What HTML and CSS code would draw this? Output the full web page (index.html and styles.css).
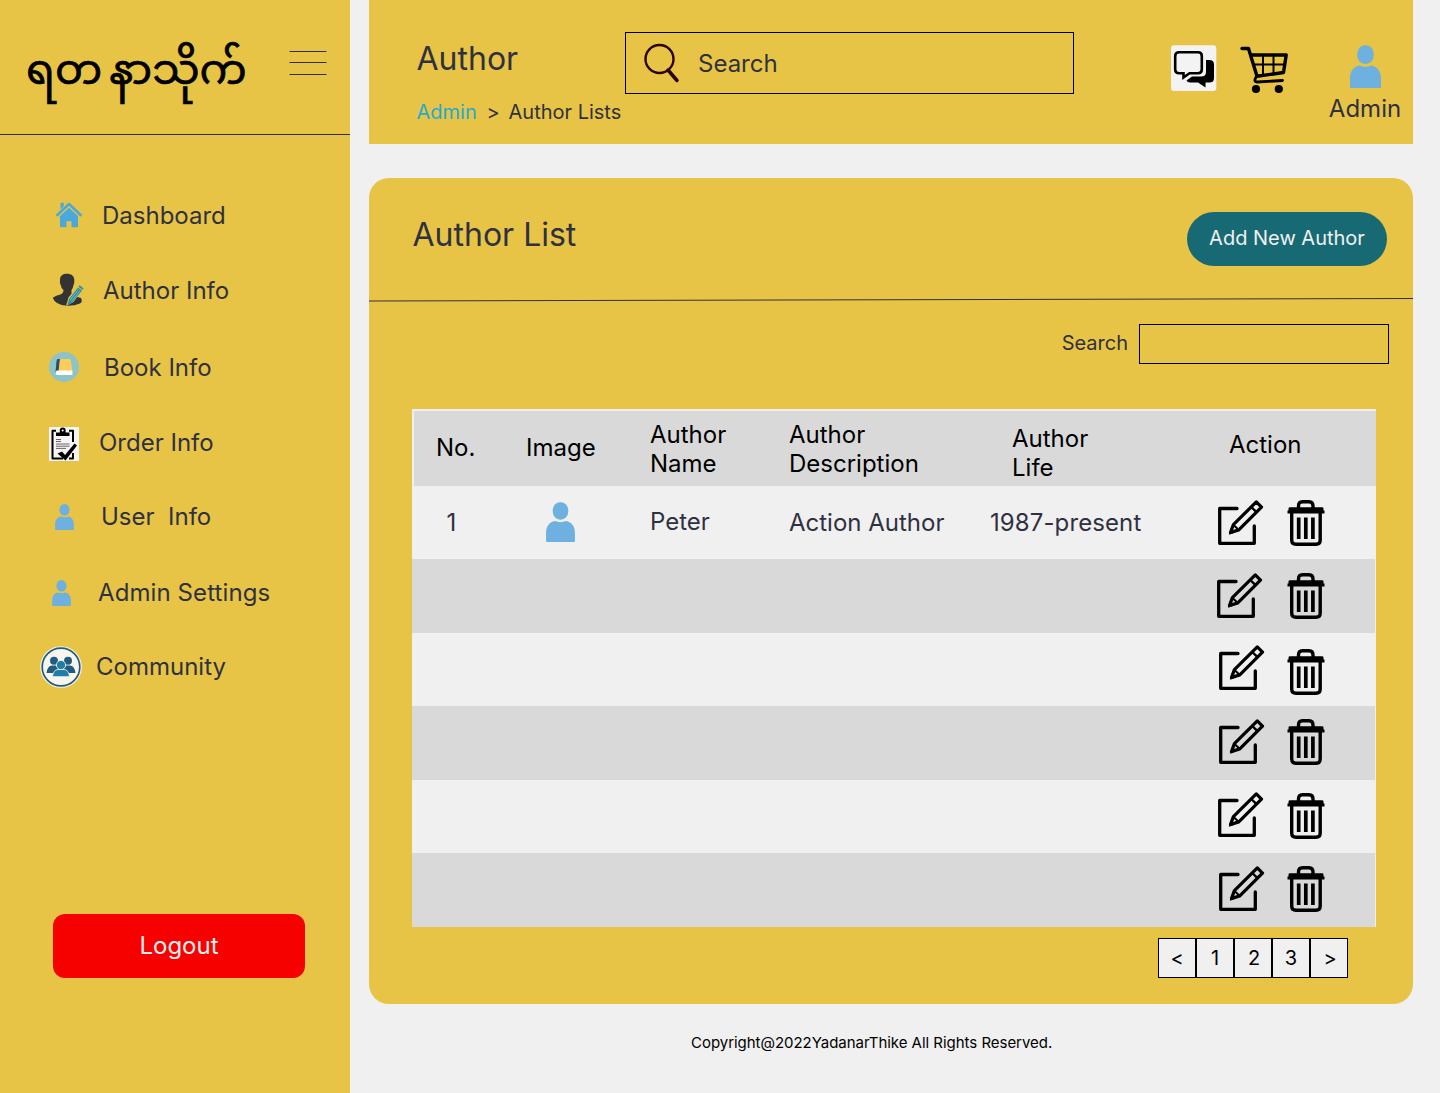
FILE: index.html
```html
<!DOCTYPE html>
<html lang="en">
<head>
<meta charset="utf-8">
<title>Author List</title>
<link rel="stylesheet" href="styles.css">
</head>
<body>
<svg class="defs" width="0" height="0">
  <symbol id="person" viewBox="0 0 31 43">
    <rect x="7.200" y="0.200" width="16.600" height="18.800" rx="8" ry="8.500"/>
    <path d="M0 42V33C0 26 4 21.500 9.500 20.500Q15.500 23 21.500 20.500C27 21.500 31 26 31 33V42Q31 43 30 43H1Q0 43 0 42Z"/>
  </symbol>
  <symbol id="edit" viewBox="0 0 46 46">
    <g fill="none" stroke="#000" stroke-width="3.300" stroke-linejoin="round" stroke-linecap="round">
      <path d="M19 8.500H1.700V43.300H36.300V26"/>
      <path d="M12.500 32.500L15.400 24.600L38.300 1.900L43.500 7.100L20.800 29.900Z" stroke-width="3.200"/>
      <path d="M33.300 7L38.500 12.200" stroke-width="2.400"/>
      <path d="M15.800 25.200L20.300 29.500" stroke-width="2"/>
    </g>
    <path d="M10.800 34.700L13 28L17.500 32.500Z"/>
  </symbol>
  <symbol id="trash" viewBox="0 0 38 46">
    <path d="M0.500 13.500V10.500H1.500V8.500Q1.500 7.200 3 7.200H35Q36.500 7.200 36.500 8.500V10.500H37.500V13.500Z"/>
    <g fill="none" stroke="#000">
      <path d="M11.500 8V6Q11.500 1.700 15.500 1.700H22Q26 1.700 26 6V8M4.700 12V40Q4.700 44.200 9 44.200H29Q33.200 44.200 33.200 40V12" stroke-width="3.400"/>
      <path d="M11.700 17.500V39M18.800 17.500V39M25.900 17.500V39" stroke-width="3.700"/>
    </g>
  </symbol>
</svg>

<div class="app">
  <aside class="sidebar">
    <div class="brand">
      <div class="logo" lang="my"><span>ရတ</span><span>နာသိုက်</span></div>
      <svg class="burger" width="38" height="26" viewBox="0 0 38 26"><path d="M0.500 1.500H37.500M0.500 12.500H37.500M0.500 24.500H37.500" stroke="#2f3140" fill="none"/></svg>
    </div>
    <nav class="nav">
      <a class="item dashboard">
        <svg width="26" height="26" viewBox="0 0 26 26" fill="#4aa8dc"><path d="M4.500 1.500Q4.500 0.700 5.300 0.700H7Q7.800 0.700 7.800 1.500V4.300L4.500 7.500Z"/><path d="M1.400 13L13 2L24.600 13" fill="none" stroke="#4aa8dc" stroke-width="2.600" stroke-linecap="round" stroke-linejoin="round"/><path d="M4 14L13 5.800L22 14V24.500Q22 25.300 21.200 25.300H15.500V19.300H10.500V25.300H4.800Q4 25.300 4 24.500Z"/></svg>
        <span>Dashboard</span>
      </a>
      <a class="item author">
        <svg width="32" height="34" viewBox="0 0 32 34"><path d="M8 7C8 2.500 11 0.800 15 0.800S22.300 2.800 22.300 7Q22.600 10 21.500 12Q21 15.500 19.500 17V20.500Q20.500 22.500 24 23.500L29 25Q31 29 28 30.500Q22 33 15 32.700Q3 32 0.800 24.800Q4 22.500 8.500 21.500Q11.500 20 11.500 17Q9 15 8.700 12Q7.500 10 8 7Z" fill="#333"/><path d="M14 33L16.500 24.500L26.500 12L31.500 16L21.500 29Z" fill="#e8c446"/><path d="M15.300 32.500L17 26L26 14.500L30 17.500L20.500 29.500Z" fill="#2a8fab"/><path d="M18 27L26.500 16.500M19.500 28.500L28 18" stroke="#8dc9b4" stroke-width=".8"/><path d="M27 13L31 16" stroke="#2a8fab" stroke-width="2"/></svg>
        <span>Author Info</span>
      </a>
      <a class="item book">
        <svg width="30" height="30" viewBox="0 0 30 30"><circle cx="15" cy="15" r="15" fill="#8cc4c9"/><path d="M9 7H11L10 20L6.500 21L7.500 9Q7.800 7 9 7Z" fill="#2b4c66"/><path d="M11 7H20.500Q21.700 7 21.900 8.500L23.300 19H9.600Z" fill="#fdcb58"/><path d="M7.500 18.500H23.400V23H8.500Q6.500 23 6.500 21Z" fill="#fff"/></svg>
        <span>Book Info</span>
      </a>
      <a class="item order">
        <svg width="30" height="34" viewBox="0 0 30 34"><path d="M0 0H30V34H0Z" fill="#f5f5f5"/><path d="M7 3.800H3.500V31.500H14M20 3.800H24V15M24 26V31.500H20" fill="none" stroke="#000" stroke-width="2" stroke-linejoin="round"/><path d="M7 9V5.500H10.800V3Q10.800 0.500 13.700 0.500T16.600 3V5.500H20.500V9Z"/><circle cx="13.700" cy="3.500" r="1" fill="#fff"/><path d="M7 12.500H12M7 14.500H12M7 17H20.500M7 19.200H20.500M7 21.400H17" stroke="#666" fill="none"/><path d="M8.500 26.500L13 24.500L16 28L25.500 16.500L28 18.500L16.500 33.500Z"/></svg>
        <span>Order Info</span>
      </a>
      <a class="item user"><svg class="blue" width="19" height="26"><use href="#person"/></svg><span>User&nbsp; Info</span></a>
      <a class="item admin"><svg class="blue" width="19" height="26"><use href="#person"/></svg><span>Admin Settings</span></a>
      <a class="item community">
        <svg width="42" height="42" viewBox="0 0 42 42"><circle cx="21" cy="21" r="20.800" fill="#f7f5ee"/><circle cx="21" cy="21" r="18.800" fill="none" stroke="#215c80" stroke-width="1.700"/><g fill="#215c80"><circle cx="14" cy="14.800" r="4"/><circle cx="28" cy="14.800" r="4"/><path d="M6.500 27Q7.500 19.500 12 19.500H16L19 24L14 27ZM35.500 27Q34.500 19.500 30 19.500H26L23 24L28 27Z"/></g><g fill="#1f7da6" stroke="#f7f5ee" stroke-width=".8"><path d="M12.500 30.700Q13.500 23.500 18 23.500H24Q28.500 23.500 29.500 30.700Z"/><circle cx="21" cy="19" r="4.600"/></g></svg>
        <span>Community</span>
      </a>
    </nav>
    <button class="logout">Logout</button>
  </aside>

  <main class="main">
    <header class="topbar">
      <div class="heading">
        <h1>Author</h1>
        <div class="crumbs"><a>Admin</a><span>&gt;</span><span>Author Lists</span></div>
      </div>
      <div class="search">
        <svg width="36" height="40" viewBox="0 0 36 40" fill="none" stroke="#2b0505"><circle cx="15.500" cy="16" r="14" stroke-width="2.400"/><path d="M24 27L33 37.500" stroke-width="3.500" stroke-linecap="round"/></svg>
        <span>Search</span>
      </div>
      <svg class="chat" width="46" height="46" viewBox="0 0 46 46"><rect y="0.300" width="45.300" height="45.600" rx="3" fill="#f3f3f3"/><path d="M35 15H38.500Q43 15 43 19.500V33Q43 37.500 38.500 37.500H34.500V42.500L27 37.500H19Q16.500 37.500 15.500 35.500L21 31.500H30Q35 31.500 35 27Z"/><path d="M7 7.300H27Q30.800 7.300 30.800 11V24.500Q30.800 28.200 27 28.200H18.500L12.500 32.500V28.200H8Q4.200 28.200 4.200 24.500V11Q4.200 7.300 8 7.300Z" fill="#f3f3f3" stroke="#000" stroke-width="2.600"/></svg>
      <svg class="cart" width="48" height="48" viewBox="0 0 48 48"><g fill="none" stroke="#000" stroke-linecap="round" stroke-linejoin="round"><path d="M2 2.500H8.500L17 30.300L43.500 26.500L46.200 9H10.500" stroke-width="3.400"/><path d="M16.500 30.500Q13 35.500 17 36L42.500 34.500" stroke-width="2.800"/><path d="M14 18.500H44M23 9V29M33.500 9V28" stroke-width="2"/></g><circle cx="16" cy="43" r="4.100"/><circle cx="38.800" cy="43" r="4.100"/></svg>
      <div class="profile"><svg class="blue" width="31" height="43"><use href="#person"/></svg><span>Admin</span></div>
    </header>

    <section class="card">
      <div class="card-head">
        <h2>Author List</h2>
        <button class="add">Add New Author</button>
      </div>
      <svg class="rule" width="1044" height="4" viewBox="0 0 1044 4"><path d="M0 3L1044 0.500" stroke="#2f3140"/></svg>
      <div class="filter"><label>Search</label><div class="field"></div></div>
      <div class="table">
        <div class="row head">
          <span class="no">No.</span><span class="image">Image</span><span class="name">Author<br>Name</span><span class="desc">Author<br>Description</span><span class="life">Author<br>Life</span><span class="action">Action</span>
        </div>
        <div class="row first">
          <span class="no">1</span><span class="image"><svg class="blue" width="29" height="40"><use href="#person"/></svg></span><span class="name">Peter</span><span class="desc">Action Author</span><span class="life">1987-present</span>
          <span class="tools"><svg class="edit" width="46" height="46"><use href="#edit"/></svg><svg class="trash" width="38" height="46"><use href="#trash"/></svg></span>
        </div>
        <div class="row dark r2"><span class="tools"><svg class="edit" width="46" height="46"><use href="#edit"/></svg><svg class="trash" width="38" height="46"><use href="#trash"/></svg></span></div>
        <div class="row r3"><span class="tools"><svg class="edit" width="46" height="46"><use href="#edit"/></svg><svg class="trash" width="38" height="46"><use href="#trash"/></svg></span></div>
        <div class="row dark r4"><span class="tools"><svg class="edit" width="46" height="46"><use href="#edit"/></svg><svg class="trash" width="38" height="46"><use href="#trash"/></svg></span></div>
        <div class="row r5"><span class="tools"><svg class="edit" width="46" height="46"><use href="#edit"/></svg><svg class="trash" width="38" height="46"><use href="#trash"/></svg></span></div>
        <div class="row dark r6"><span class="tools"><svg class="edit" width="46" height="46"><use href="#edit"/></svg><svg class="trash" width="38" height="46"><use href="#trash"/></svg></span></div>
      </div>
      <div class="pager"><a>&lt;</a><a>1</a><a>2</a><a>3</a><a>&gt;</a></div>
    </section>
    <footer class="footer">Copyright@2022YadanarThike All Rights Reserved.</footer>
  </main>
</div>
</body>
</html>
```
FILE: styles.css
```css
* { box-sizing: border-box; }
body { margin: 0; background: #f0f0f0; font-family: Inter, sans-serif; font-size: 24px; line-height: 29px; color: #2f3140; }
h1, h2 { margin: 0; font-weight: 400; font-size: 32px; line-height: 39px; }
svg { display: block; flex: none; }
button { border: 0; padding: 0; font: inherit; }
span { white-space: nowrap; }
.defs { position: absolute; }
.blue { fill: #6eb0df; }
.app { display: flex; height: 1093px; overflow: hidden; }

.sidebar { width: 350px; flex: none; background: #e8c446; display: flex; flex-direction: column; }
.brand { height: 135px; border-bottom: 1px solid #2f3140; display: flex; align-items: flex-start; padding-left: 26px; }
.logo { width: 263px; display: flex; gap: 7px; padding-top: 34px; font-family: "Noto Sans Myanmar", "Padauk", Inter, sans-serif; font-size: 42px; line-height: 80px; color: #000; -webkit-text-stroke: 0.7px #000; }
.burger { margin-top: 50px; }
.nav { height: 778px; padding-top: 55px; }
.item { display: flex; align-items: center; height: 50px; margin-bottom: 25px; }
.dashboard { padding-left: 56px; gap: 20px; }
.author { padding-left: 52px; gap: 19px; margin-bottom: 27px; }
.book { padding-left: 49px; gap: 25px; }
.order { padding-left: 49px; gap: 20px; margin-bottom: 24px; }
.order svg { margin-top: 3px; }
.user { padding-left: 55px; gap: 27px; margin-bottom: 26px; }
.admin { padding-left: 52px; gap: 27px; margin-bottom: 24px; }
.admin span { letter-spacing: 0.1px; }
.user svg, .admin svg { margin-top: 1px; }
.community { padding-left: 40px; gap: 14px; }
.community svg { margin-top: 1px; }
.logout { width: 252px; height: 64px; margin: 0.5px 0 0 53px; border-radius: 12px; background: #f70000; color: #f0f0f0; }

.main { width: 1090px; flex: none; padding: 0 27px 0 19px; }
.topbar { height: 143.5px; background: #e8c446; display: flex; align-items: flex-start; }
.heading { width: 256px; padding: 39px 0 0 47.5px; }
.crumbs { display: flex; font-size: 20px; line-height: 24px; margin-top: 22px; }
.crumbs a { color: #25aad0; width: 70px; }
.crumbs span:nth-child(2) { width: 22px; }
.search { width: 449px; height: 62px; margin-top: 32px; border: 1px solid #000; display: flex; align-items: center; padding-left: 18px; gap: 18px; }
.chat { margin: 45px 0 0 97px; }
.cart { margin: 46px 0 0 23px; }
.profile { width: 96px; margin: 45px 0 0 29px; display: flex; flex-direction: column; align-items: center; gap: 6px; }

.card { height: 826px; margin-top: 34.5px; border-radius: 20px; background: #e8c446; }
.card-head { height: 120px; display: flex; justify-content: space-between; padding: 33px 26px 0 43.5px; }
.card-head h2 { padding-top: 4px; }
.add { width: 200px; height: 54px; margin-top: 0.5px; border-radius: 27px; background: #176a74; color: #f0f0f0; font-size: 20px; }
.filter { display: flex; justify-content: flex-end; align-items: center; gap: 11px; margin-top: 21.5px; padding-right: 24px; font-size: 20px; }
.field { width: 250px; height: 40px; border: 1px solid #000; }
.table { width: 964px; height: 518px; margin: 45.5px 0 0 43px; padding-top: 2px; background: #f0f0f0; }
.row { display: grid; grid-template-columns: 114px 124px 139px 201px 228px 1fr; height: 73.5px; }
.head { margin-left: 2px; padding-left: 22px; height: 74.5px; background: #d9d9d9; color: #000; }
.head .no, .head .image { padding-top: 22px; }
.head { grid-template-columns: 90px 124px 139px 223px 217px 1fr; }
.head .name, .head .desc { padding-top: 9px; }
.head .life { padding-top: 13px; }
.head .action { padding-top: 19px; }
.first .no { padding: 22px 0 0 34.5px; }
.first .image { padding: 16px 0 0 20px; }
.first .name { padding-top: 21px; }
.first .desc, .first .life { padding-top: 22px; }
.first .life { letter-spacing: 0.1px; }
.dark { background: #d9d9d9; margin-right: 1.5px; }
.tools { grid-column: 6; display: flex; align-items: flex-start; padding-top: 14px; gap: 23px; }
.r2 .tools { margin-left: -1px; gap: 24px; padding-top: 13.5px; }
.r3 .tools { margin-left: 1px; gap: 22px; padding-top: 12.5px; }
.r3 .trash { margin-top: 4px; }
.r4 .tools { margin-left: 1px; gap: 22px; padding-top: 13px; }
.r5 .tools { gap: 23px; padding-top: 12.5px; }
.r5 .trash { margin-top: 1px; }
.r6 .tools { margin-left: 1px; gap: 22px; padding-top: 13px; }
.pager { display: flex; margin: 11px 0 0 789px; font-size: 20px; color: #000; }
.pager a { width: 38px; height: 40px; border: 1px solid #000; background: #f0f0f0; display: flex; align-items: center; justify-content: center; }
.pager a:nth-child(3), .pager a:nth-child(5) { padding-left: 2px; }
.footer { margin-top: 29px; padding-left: 322px; font-size: 15px; line-height: 20px; letter-spacing: -0.03px; color: #000; }
```
